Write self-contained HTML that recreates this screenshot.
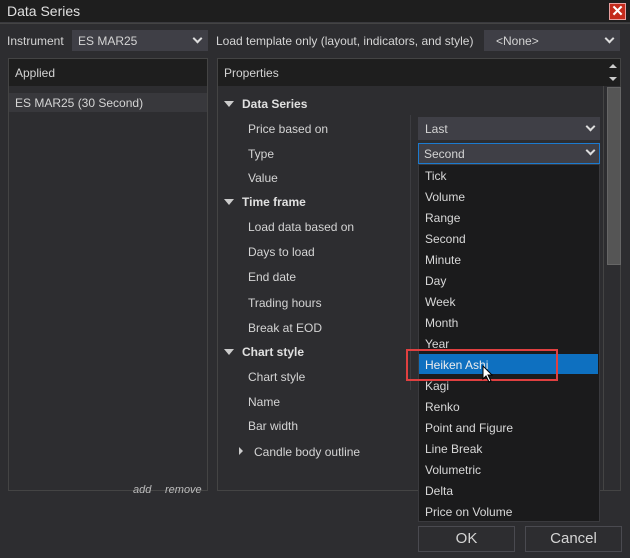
<html><head><style>
*{margin:0;padding:0;box-sizing:border-box}
body{width:630px;height:558px;background:#2d2d30;font-family:"Liberation Sans",sans-serif;font-size:12px;color:#d4d4d4;position:relative;overflow:hidden}
.a{position:absolute}
.t{position:absolute;white-space:nowrap}
.chev{position:absolute;width:7px;height:7px;border-right:2px solid #ddd;border-bottom:2px solid #ddd;transform:rotate(45deg)}
.tri{position:absolute;width:0;height:0;border-left:5px solid transparent;border-right:5px solid transparent;border-top:6px solid #ccc}
.h{font-weight:bold;color:#e0e0e0}
.li{position:absolute;left:425px;white-space:nowrap;color:#d8d8d8}
</style></head><body>
<div class="a" style="left:0;top:0;width:630px;height:23px;background:#1e1e1e;border-bottom:1px solid #3a3a3e"></div>
<div class="t" style="left:7px;top:3px;font-size:14px;color:#e0e0e0">Data Series</div>
<div class="a" style="left:609px;top:3px;width:17px;height:17px;background:#c42b1c;border:1px solid #e8a0a0;color:#fff;font-weight:bold;font-size:15px;line-height:15px;text-align:center">✕</div>
<div class="a" style="left:0;top:23px;width:630px;height:1px;background:#444"></div>
<div class="t" style="left:7px;top:34px">Instrument</div>
<div class="a" style="left:72px;top:30px;width:136px;height:21px;background:#3f3f46"></div>
<div class="t" style="left:78px;top:34px">ES MAR25</div>
<div class="chev" style="left:194px;top:35px"></div>
<div class="t" style="left:216px;top:34px">Load template only (layout, indicators, and style)</div>
<div class="a" style="left:484px;top:30px;width:136px;height:21px;background:#3f3f46"></div>
<div class="t" style="left:496px;top:34px">&lt;None&gt;</div>
<div class="chev" style="left:606px;top:35px"></div>

<div class="a" style="left:8px;top:58px;width:200px;height:433px;border:1px solid #444;background:#2d2d30"></div>
<div class="a" style="left:9px;top:59px;width:198px;height:27px;background:#1e1e1e"></div>
<div class="t" style="left:15px;top:66px">Applied</div>
<div class="a" style="left:9px;top:93px;width:198px;height:19px;background:#38383c"></div>
<div class="t" style="left:15px;top:96px">ES MAR25 (30 Second)</div>
<div class="t" style="left:133px;top:484px;font-style:italic;font-size:11px;color:#bbb">add</div>
<div class="t" style="left:165px;top:484px;font-style:italic;font-size:11px;color:#bbb">remove</div>

<div class="a" style="left:217px;top:58px;width:404px;height:433px;border:1px solid #444;background:#2d2d30"></div>
<div class="a" style="left:218px;top:59px;width:385px;height:27px;background:#1e1e1e"></div>
<div class="a" style="left:603px;top:59px;width:17px;height:27px;background:#1e1e1e"></div>
<div class="t" style="left:224px;top:66px">Properties</div>
<div class="a" style="left:609px;top:64px;border-left:4px solid transparent;border-right:4px solid transparent;border-bottom:4px solid #ccc"></div>
<div class="a" style="left:609px;top:77px;border-left:4px solid transparent;border-right:4px solid transparent;border-top:4px solid #ccc"></div>
<div class="a" style="left:603px;top:86px;width:1px;height:404px;background:#444"></div>
<div class="a" style="left:607px;top:87px;width:14px;height:178px;background:#555;border:1px solid #666"></div>
<div class="a" style="left:410px;top:115px;width:1px;height:275px;background:#3c3c40"></div>

<div class="tri" style="left:224px;top:101px"></div><div class="t h" style="left:242px;top:97px">Data Series</div>
<div class="t" style="left:248px;top:122px">Price based on</div>
<div class="t" style="left:248px;top:147px">Type</div>
<div class="t" style="left:248px;top:171px">Value</div>
<div class="tri" style="left:224px;top:199px"></div><div class="t h" style="left:242px;top:195px">Time frame</div>
<div class="t" style="left:248px;top:220px">Load data based on</div>
<div class="t" style="left:248px;top:245px">Days to load</div>
<div class="t" style="left:248px;top:270px">End date</div>
<div class="t" style="left:248px;top:296px">Trading hours</div>
<div class="t" style="left:248px;top:321px">Break at EOD</div>
<div class="tri" style="left:224px;top:349px"></div><div class="t h" style="left:242px;top:345px">Chart style</div>
<div class="t" style="left:248px;top:370px">Chart style</div>
<div class="t" style="left:248px;top:395px">Name</div>
<div class="t" style="left:248px;top:419px">Bar width</div>
<div class="a" style="left:239px;top:447px;border-top:4px solid transparent;border-bottom:4px solid transparent;border-left:4px solid #ccc"></div>
<div class="t" style="left:254px;top:445px">Candle body outline</div>

<div class="a" style="left:418px;top:117px;width:182px;height:23px;background:#3f3f46"></div>
<div class="t" style="left:425px;top:122px">Last</div>
<div class="chev" style="left:587px;top:123px"></div>
<div class="a" style="left:418px;top:143px;width:182px;height:21px;background:#3f3f46;border:1px solid #1c7bd0"></div>
<div class="t" style="left:424px;top:147px">Second</div>
<div class="chev" style="left:587px;top:147px"></div>

<div class="a" style="left:418px;top:164px;width:182px;height:358px;background:#1b1b1c;border:1px solid #3a3a3e"></div>
<div class="a" style="left:419px;top:354px;width:179px;height:20px;background:#0e70c0"></div>
<div class="li" style="top:169px">Tick</div>
<div class="li" style="top:190px">Volume</div>
<div class="li" style="top:211px">Range</div>
<div class="li" style="top:232px">Second</div>
<div class="li" style="top:253px">Minute</div>
<div class="li" style="top:274px">Day</div>
<div class="li" style="top:295px">Week</div>
<div class="li" style="top:316px">Month</div>
<div class="li" style="top:337px">Year</div>
<div class="li" style="top:358px;color:#eee">Heiken Ashi</div>
<div class="li" style="top:379px">Kagi</div>
<div class="li" style="top:400px">Renko</div>
<div class="li" style="top:421px">Point and Figure</div>
<div class="li" style="top:442px">Line Break</div>
<div class="li" style="top:463px">Volumetric</div>
<div class="li" style="top:484px">Delta</div>
<div class="li" style="top:505px">Price on Volume</div>
<div class="a" style="left:406px;top:349px;width:152px;height:32px;border:2px solid #e04040"></div>
<svg class="a" style="left:482px;top:365px" width="12" height="18"><path d="M1 1 L1 14 L4 11 L7 17 L9 16 L6 10 L10 10 Z" fill="#fff" stroke="#000" stroke-width="1"/></svg>

<div class="a" style="left:418px;top:526px;width:97px;height:26px;border:1px solid #4a4a50;background:#2d2d30;text-align:center;line-height:24px;font-size:15px">OK</div>
<div class="a" style="left:525px;top:526px;width:97px;height:26px;border:1px solid #4a4a50;background:#2d2d30;text-align:center;line-height:24px;font-size:15px">Cancel</div>
</body></html>
